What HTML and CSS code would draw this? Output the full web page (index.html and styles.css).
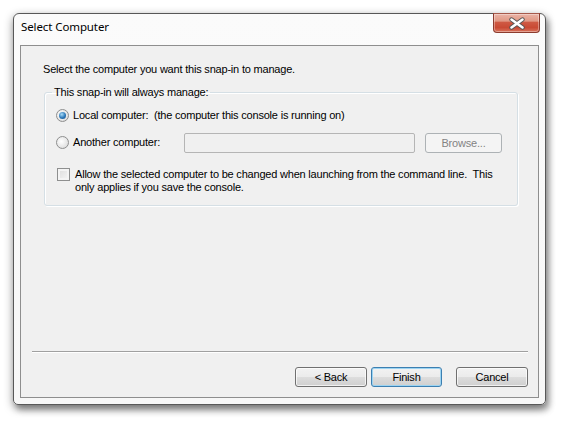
FILE: index.html
```html
<!DOCTYPE html>
<html lang="en">

<head>
    <meta charset="UTF-8">
    <meta name="viewport" content="width=device-width, initial-scale=1.0">
    <title>Select Computer</title>

    <link rel="stylesheet" href="styles.css">
</head>

<body>
    <div class="window">
        <div class="titlebar">
            <span class="title">Select Computer</span>
            <span class="close-btn">
                <svg viewBox="0 0 18 13" width="18" height="13">
                    <path d="M3.5 2.5 L14.5 10.5 M14.5 2.5 L3.5 10.5" stroke="#555555" stroke-width="4.4" stroke-linecap="round" />
                    <path d="M3.5 2.5 L14.5 10.5 M14.5 2.5 L3.5 10.5" stroke="#ffffff" stroke-width="2.6" stroke-linecap="round" />
                </svg>
            </span>
        </div>

        <div class="client">
            <p class="intro">Select the computer you want this snap-in to manage.</p>

            <fieldset class="group">
                <legend>This snap-in will always manage:</legend>

                <label class="row">
                    <span class="radio checked"></span>
                    <span>Local computer:&nbsp; (the computer this console is running on)</span>
                </label>

                <div class="row">
                    <label class="row-label">
                        <span class="radio"></span>
                        <span>Another computer:</span>
                    </label>
                    <span class="textbox"></span>
                    <span class="btn disabled browse">Browse...</span>
                </div>

                <label class="check-row">
                    <span class="checkbox"></span>
                    <span>Allow the selected computer to be changed when launching from the command line.&nbsp; This
                        only applies if you save the console.</span>
                </label>
            </fieldset>

            <div class="spacer"></div>

            <hr class="separator">

            <div class="buttons">
                <span class="btn">&lt; Back</span>
                <span class="btn default">Finish</span>
                <span class="btn cancel">Cancel</span>
            </div>
        </div>
    </div>
</body>

</html>
```

FILE: styles.css
```css
* {
    box-sizing: border-box;
}

body {
    background-color: #ffffff;
    margin: 0;
    height: 100vh;
    overflow: hidden;
    font-family: "Liberation Sans", Arial, sans-serif;
    font-size: 11px;
    letter-spacing: -0.2px;
    color: #000000;
}

.window {
    margin: 13px 0 0 13px;
    width: 533px;
    height: 392px;
    display: flex;
    flex-direction: column;
    padding: 0 6px 6px 6px;
    background: linear-gradient(#fbfbfb, #f7f7f7);
    border: 1px solid #585858;
    border-radius: 6px 6px 5px 5px;
    box-shadow: 0 3px 10px rgba(0, 0, 0, 0.4), 3px 5px 6px rgba(0, 0, 0, 0.3);
}

.titlebar {
    height: 31px;
    display: flex;
    align-items: flex-start;
    justify-content: space-between;
}

.title {
    font-family: "Noto Sans", "Open Sans", sans-serif;
    font-size: 11.5px;
    letter-spacing: -0.1px;
    padding: 5px 0 0 1px;
}

.close-btn {
    width: 47px;
    height: 20px;
    margin: -1px -1px 0 0;
    display: flex;
    align-items: center;
    justify-content: center;
    border: 1px solid #8c3b2e;
    border-top-color: #a65a4c;
    border-radius: 0 0 4px 4px;
    background: linear-gradient(#eab3a6 0%, #e09884 40%, #cf5a44 45%, #c94a34 75%, #d8735c 100%);
    box-shadow: inset 0 0 0 1px rgba(255, 255, 255, 0.35);
}

.client {
    flex: 1;
    display: flex;
    flex-direction: column;
    background-color: #f0f0f0;
    border: 1px solid #8e8e8e;
}

.intro {
    margin: 17px 0 0 22px;
    line-height: 13px;
}

.group {
    margin: 10px 20px 0 23px;
    padding: 0 0 11px 11px;
    border: 1px solid #d5dfe5;
    border-radius: 3px;
    box-shadow: inset 1px 1px 0 #ffffff, 1px 1px 0 #ffffff;
}

.group legend {
    padding: 0 2px;
    margin-left: -4px;
    line-height: 13px;
}

.row,
.row-label {
    display: flex;
    align-items: center;
    height: 20px;
}

.group>.row:first-of-type {
    margin-top: 6px;
}

.group>.row+.row {
    margin-top: 7px;
}

.row-label {
    width: 128px;
}

.radio {
    width: 13px;
    height: 13px;
    margin-right: 4px;
    border: 1px solid #8e8f8f;
    border-radius: 50%;
    background: radial-gradient(circle at 40% 40%, #ffffff, #e6e6e6 60%, #cfcfcf);
    display: flex;
    align-items: center;
    justify-content: center;
}

.radio.checked::after {
    content: "";
    width: 7px;
    height: 7px;
    border-radius: 50%;
    background: radial-gradient(circle at 40% 35%, #a9dcf8, #2b77b8 55%, #1a4f87);
}

.textbox {
    width: 231px;
    height: 20px;
    margin-top: 1px;
    border: 1px solid #b5b5b5;
    border-radius: 2px;
    background-color: #f0f0f0;
}

.btn {
    display: flex;
    align-items: center;
    justify-content: center;
    height: 20px;
    border: 1px solid #707070;
    border-radius: 3px;
    background: linear-gradient(#f2f2f2 0%, #ebebeb 50%, #dddddd 51%, #cfcfcf 100%);
    box-shadow: inset 0 0 0 1px rgba(255, 255, 255, 0.7);
}

.btn.disabled {
    border-color: #adb2b5;
    background: #f4f4f4;
    color: #838383;
    box-shadow: none;
}

.browse {
    width: 77px;
    margin: 1px 0 0 10px;
}

.check-row {
    display: flex;
    align-items: flex-start;
    margin-top: 16px;
    padding-right: 10px;
    line-height: 13px;
}

.checkbox {
    flex: none;
    width: 13px;
    height: 13px;
    margin: 0 5px 0 1px;
    border: 1px solid #8e8f8f;
    background: linear-gradient(135deg, #dcdcdc, #f6f6f6);
    box-shadow: inset 0 0 0 2px #f4f4f4;
}

.spacer {
    flex: 1;
}

.separator {
    margin: 0 10px 0 11px;
    border: none;
    border-top: 1px solid #a0a0a0;
    border-bottom: 1px solid #ffffff;
}

.buttons {
    display: flex;
    justify-content: flex-end;
    gap: 4px;
    margin: 14px 10px 10px 0;
}

.buttons .btn {
    width: 72px;
}

.buttons .default {
    width: 71px;
    border-color: #3c7fb1;
    box-shadow: inset 0 0 0 1px #9cd4f2;
}

.buttons .cancel {
    width: 72px;
    margin-left: 10px;
}
```
